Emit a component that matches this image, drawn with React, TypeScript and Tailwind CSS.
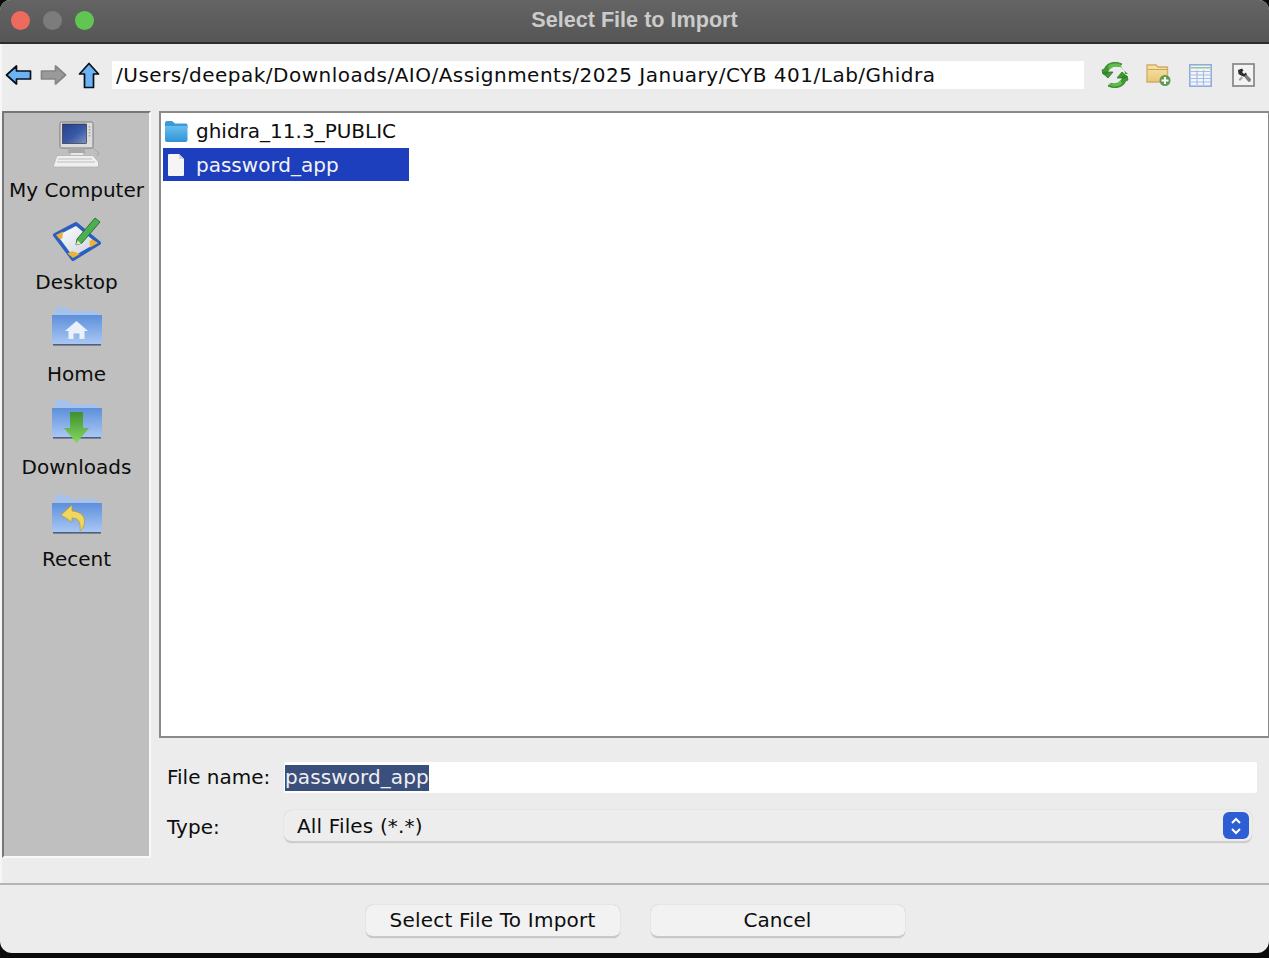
const font = "font-['DejaVu_Sans',sans-serif]";

function BackArrow({ flip = false, gray = false }: { flip?: boolean; gray?: boolean }) {
  return (
    <svg width="27" height="22" viewBox="0 0 27 22" className={flip ? "-scale-x-100" : ""}>
      <path
        d="M1.5 11 L11.5 2 V7 H25.5 V15 H11.5 V20 Z"
        fill={gray ? "#9a9a9a" : "#6db2f2"}
        stroke={gray ? "#858585" : "#07101c"}
        strokeWidth="1.7"
        strokeLinejoin="round"
      />
    </svg>
  );
}

function UpArrow() {
  return (
    <svg width="22" height="27" viewBox="0 0 22 27">
      <path
        d="M11 1.5 L20.5 12 H15.5 V25.5 H6.5 V12 H1.5 Z"
        fill="#6db2f2"
        stroke="#07101c"
        strokeWidth="1.7"
        strokeLinejoin="round"
      />
    </svg>
  );
}

function RefreshIcon() {
  return (
    <svg width="28" height="28" viewBox="0 0 28 28">
      <path
        d="M2 13 L6 13 C7 7 12 4 18 5.5 L21 3 C14 -0.5 5 2 3.5 8 L1 9 Z M6 11 L1.5 12 L7 17 L12 11 Z"
        fill="#3f9a32"
        stroke="#2b7a24"
        strokeWidth="0.8"
      />
      <path d="M7 5 C11 2 16 2 20 4 L21 7 C17 4.5 11 5 8.5 9 Z" fill="#5ec04a" />
      <path d="M21 7 C23 9 24 10.5 24 13 L27 13 L21.5 8 Z" fill="#3f9a32" />
      <path
        d="M26 15 L22 15 C21 21 16 24 10 22.5 L7 25 C14 28.5 23 26 24.5 20 L27 19 Z M22 17 L26.5 16 L21 11 L16 17 Z"
        fill="#3f9a32"
        stroke="#2b7a24"
        strokeWidth="0.8"
      />
      <path d="M21 23 C17 26 12 26 8 24 L7.5 22.5 C12 24 17 23 19.5 19 Z" fill="#5ec04a" />
    </svg>
  );
}

function NewFolderIcon() {
  return (
    <svg width="26" height="24" viewBox="0 0 26 24">
      <defs>
        <linearGradient id="nf" x1="0" y1="0" x2="0" y2="1">
          <stop offset="0" stopColor="#f6e5a8" />
          <stop offset="1" stopColor="#e9c877" />
        </linearGradient>
      </defs>
      <path d="M1 2 H10 L12 4 H21.5 V19 H1 Z" fill="url(#nf)" stroke="#d2aa6a" strokeWidth="1.3" />
      <path d="M1.5 7 H21 V6 H1.5 Z" fill="#c9a565" />
      <circle cx="19" cy="17.5" r="5.5" fill="#5f9a52" />
      <path d="M19 14 V21 M15.5 17.5 H22.5" stroke="#fff" strokeWidth="2" />
    </svg>
  );
}

function TableIcon() {
  return (
    <svg width="23" height="23" viewBox="0 0 23 23">
      <rect x="0.8" y="0.8" width="21.4" height="21.4" fill="#f2f5fb" stroke="#8eaedb" strokeWidth="1.6" />
      <rect x="2" y="3" width="19" height="1.5" fill="#9cc48c" />
      <path
        d="M2 7.5 H21 M2 11 H21 M2 14.5 H21 M2 18 H21 M8 6 V21 M14.5 6 V21"
        stroke="#a7bce2"
        strokeWidth="1.2"
      />
    </svg>
  );
}

function ToolsIcon() {
  return (
    <svg width="23" height="24" viewBox="0 0 23 24">
      <rect x="1" y="1" width="21" height="22" fill="#f3f3f3" stroke="#8c8c8c" strokeWidth="1.8" />
      <path d="M6 7 L10 5.5 L11.5 7.5 L10 9 L12 11 L14 9.5 L15 12 L13 14 L10 13 L6.5 11 Z" fill="#2b2b2b" />
      <path d="M12 13.5 L14.5 11.5 L19 16 L18.5 18.5 L16.5 19 Z" fill="#7d7d7d" />
      <path d="M6.5 16.5 L9.5 13.5 L11 15 L8 18 Z" fill="#a3a3a3" />
    </svg>
  );
}

function ComputerIcon() {
  return (
    <svg width="50" height="48" viewBox="0 0 50 48">
      <defs>
        <linearGradient id="scr" x1="0" y1="0" x2="1" y2="1">
          <stop offset="0" stopColor="#26408c" />
          <stop offset="0.55" stopColor="#3a5aa6" />
          <stop offset="1" stopColor="#8093c4" />
        </linearGradient>
      </defs>
      <rect x="8" y="2" width="33" height="26" rx="1.5" fill="#dcdcdc" stroke="#7a7a7a" />
      <rect x="10.5" y="4" width="24" height="19.5" fill="url(#scr)" stroke="#222" strokeWidth="0.6" />
      <path d="M37.5 6 V18" stroke="#a5a5a5" strokeWidth="1.6" strokeDasharray="1.5 1.5" />
      <path d="M17 28 H32 L33.5 33 H15.5 Z" fill="#a8a8a8" />
      <path d="M19 33 H31 V35 H19 Z" fill="#e8e8e8" />
      <path d="M1.5 45.5 L5 35.5 H41 L46.5 42 V47 H1.5 Z" fill="#efefef" stroke="#b0b0b0" strokeWidth="0.8" />
      <path d="M6 39 H40 M5 42 H43" stroke="#bdbdbd" strokeWidth="1" />
      <path d="M41 28 L47 33 L45 36" fill="none" stroke="#a0a0a0" strokeWidth="0.8" />
    </svg>
  );
}

function DesktopIcon() {
  return (
    <svg width="50" height="47" viewBox="0 0 50 47">
      <defs>
        <linearGradient id="pad" x1="0" y1="0" x2="1" y2="1">
          <stop offset="0" stopColor="#ffffff" />
          <stop offset="1" stopColor="#c9d0dd" />
        </linearGradient>
      </defs>
      <path d="M3 20 L24 9 L47 28 L21 44 Z" fill="#3a74d6" stroke="#2a5fc0" strokeWidth="4" strokeLinejoin="round" />
      <path d="M5.5 20.5 L24 11 L44.5 28 L21 41.5 Z" fill="url(#pad)" />
      <path d="M4 20 L11 16.5 L10.5 23 L8 24.5 Z M46 28 L38 32.5 L37.5 26 L40.5 24.5 Z M21 43 L28 39 L20 36 L15.5 38.5 Z" fill="#eab23a" />
      <path d="M25 24 L43 3 L48 7 L30 28 L24 30 Z" fill="#4caf50" stroke="#1e6a2a" strokeWidth="0.9" strokeLinejoin="round" />
      <path d="M25.5 25.5 L24 30 L29 28.5 Z" fill="#f3e3c0" />
    </svg>
  );
}

function BlueFolder({ id, children }: { id: string; children?: React.ReactNode }) {
  return (
    <svg width="52" height="42" viewBox="0 0 52 42" className="overflow-visible">
      <defs>
        <linearGradient id={id} x1="0" y1="0" x2="0" y2="1">
          <stop offset="0" stopColor="#5d8fdb" />
          <stop offset="1" stopColor="#a9c7f4" />
        </linearGradient>
      </defs>
      <path d="M4 8 V2 Q4 0 6 0 H16 L20 4 H46 V10 H4 Z" fill="#a7c2ea" />
      <path d="M1 8 H51 V37 H1 Z" fill={`url(#${id})`} />
      <rect x="2" y="37" width="48" height="1.6" fill="#4d6075" />
      {children}
    </svg>
  );
}

function SideItem({ label, iconClass, children }: { label: string; iconClass: string; children: React.ReactNode }) {
  return (
    <div className="flex h-[92.2px] flex-col items-center">
      <div className={`flex h-[64px] w-full items-end justify-center ${iconClass}`}>{children}</div>
      <span className="text-[20px] leading-[26px] whitespace-nowrap text-[#0d0d0d]">{label}</span>
    </div>
  );
}

function FileRowIcon() {
  return (
    <svg width="18" height="24" viewBox="0 0 18 24">
      <path d="M1 2 Q1 1 2 1 H12 L17 6 V22 Q17 23 16 23 H2 Q1 23 1 22 Z" fill="#f5f5f5" />
      <path d="M12 1 V6 H17 Z" fill="#d4d4d4" />
    </svg>
  );
}

function FolderRowIcon() {
  return (
    <svg width="24" height="23" viewBox="0 0 24 23">
      <defs>
        <linearGradient id="ff" x1="0" y1="0" x2="0" y2="1">
          <stop offset="0" stopColor="#68bdee" />
          <stop offset="1" stopColor="#2f93d7" />
        </linearGradient>
      </defs>
      <path d="M1 3 Q1 1 3 1 H8 L11 3.5 H22 Q23.5 3.5 23.5 5 V8 H1 Z" fill="#3b9ad9" />
      <path d="M1 6 H23.5 V20 Q23.5 22 21.5 22 H3 Q1 22 1 20 Z" fill="url(#ff)" />
    </svg>
  );
}

export default function App() {
  return (
    <div className={`h-[958px] w-full overflow-hidden bg-[#0a0a0a] ${font}`}>
      <div className="flex h-[953px] flex-col overflow-hidden rounded-t-[10px] rounded-b-[12px] bg-[#ececec]">
        {/* Title bar */}
        <div className="relative flex h-[44px] shrink-0 items-center justify-center border-b-2 border-[#2c2c2c] bg-gradient-to-b from-[#646464] to-[#565656] pb-[1px]">
          <div className="absolute left-[11px] top-[11px] flex gap-[13px]">
            <span className="h-[19px] w-[19px] rounded-full bg-[#ec6a5e]" />
            <span className="h-[19px] w-[19px] rounded-full bg-[#7c7c7c]" />
            <span className="h-[19px] w-[19px] rounded-full bg-[#61c554]" />
          </div>
          <span className="font-['Liberation_Sans',sans-serif] text-[21.6px] font-bold text-[#cbcbcb]">
            Select File to Import
          </span>
        </div>

        {/* Toolbar */}
        <div className="flex h-[67px] shrink-0 items-center border-l-2 border-[#f6f6f6] pb-[5px] pl-[3px]">
          <BackArrow />
          <div className="ml-[8px]">
            <BackArrow flip gray />
          </div>
          <div className="ml-[11px]">
            <UpArrow />
          </div>
          <div className="ml-[12px] flex h-[28px] w-[972px] items-center bg-white pl-[4px] text-[20px] tracking-[0.5px] whitespace-nowrap text-[#0d0d0d]">
            /Users/deepak/Downloads/AIO/Assignments/2025 January/CYB 401/Lab/Ghidra
          </div>
          <div className="ml-[17px] flex items-center">
            <RefreshIcon />
            <div className="ml-[17px]">
              <NewFolderIcon />
            </div>
            <div className="ml-[17px]">
              <TableIcon />
            </div>
            <div className="ml-[20px]">
              <ToolsIcon />
            </div>
          </div>
        </div>

        {/* Sidebar and file list */}
        <div className="flex min-h-0 flex-1 items-start border-l-2 border-[#f6f6f6]">
          <div className="h-[747px] w-[149px] shrink-0 border-2 border-t-[#777] border-r-[#f8f8f8] border-b-[#f8f8f8] border-l-[#777] bg-[#bfbfbf]">
            <SideItem label="My Computer" iconClass="pb-[9px]">
              <ComputerIcon />
            </SideItem>
            <SideItem label="Desktop" iconClass="pb-[7px]">
              <DesktopIcon />
            </SideItem>
            <SideItem label="Home" iconClass="pb-[12px]">
              <BlueFolder id="fh">
                <path d="M25.5 14 L37 24 H33.5 V32 H28.5 V26.5 H22.5 V32 H17.5 V24 H14 Z" fill="#eaf1fb" />
              </BlueFolder>
            </SideItem>
            <SideItem label="Downloads" iconClass="pb-[12px]">
              <BlueFolder id="fd">
                <defs>
                  <linearGradient id="dl" x1="0" y1="0" x2="0" y2="1">
                    <stop offset="0" stopColor="#3f8f2e" />
                    <stop offset="1" stopColor="#86d860" />
                  </linearGradient>
                </defs>
                <path d="M19 12 H32 V28 H38 L25.5 43 L13 28 H19 Z" fill="url(#dl)" />
              </BlueFolder>
            </SideItem>
            <SideItem label="Recent" iconClass="pb-[9px]">
              <BlueFolder id="fr">
                <path
                  d="M21 10 L10 20 L21 27 V23 C27 23 30 26 29 36 C36 30 36 17 21 16 Z"
                  fill="#f0d860"
                  stroke="#b99b30"
                  strokeWidth="0.8"
                />
              </BlueFolder>
            </SideItem>
          </div>

          <div className="ml-[8px] flex min-w-0 flex-1 flex-col">
            <div className="h-[627px] border-2 border-r border-[#8a8a8a] bg-white pt-[2px] pl-[2px] text-[20px]">
              <div className="flex h-[33px] items-center pb-[1px] text-[#0d0d0d]">
                <div className="ml-[1px] flex w-[32px] items-center">
                  <FolderRowIcon />
                </div>
                ghidra_11.3_PUBLIC
              </div>
              <div className="flex h-[33px] w-[246px] items-center bg-[#1d3ebd] text-[#f3f3f3]">
                <div className="ml-[4px] flex w-[29px] items-center">
                  <FileRowIcon />
                </div>
                password_app
              </div>
            </div>

            <div className="mt-[24px] flex h-[31px] items-center pr-[12px] pl-[8px] text-[20px] text-[#0d0d0d]">
              <span className="w-[117px] shrink-0 pb-[2px]">File name:</span>
              <div className="flex h-full flex-1 items-center rounded-[2px] bg-white pl-[1px]">
                <span className="h-[26px] bg-[#3b4f7d] leading-[24px] tracking-[0.1px] text-[#f0f0f0]">password_app</span>
              </div>
            </div>

            <div className="mt-[17px] flex h-[33px] items-center pr-[17px] pl-[8px] text-[20px] text-[#0d0d0d]">
              <span className="w-[117px] shrink-0 pt-[1px]">Type:</span>
              <div className="flex h-full flex-1 items-center justify-between rounded-[8px] border-b-2 border-[#cdcdcd] bg-[#ededed] pr-[3px] pl-[13px] shadow-[0_0_1px_#bbb]">
                <span className="pt-[1px] tracking-[0.15px]">All Files (*.*)</span>
                <div className="flex h-[27px] w-[26px] items-center justify-center rounded-[6px] bg-[#2d5ed3]">
                  <svg width="14" height="20" viewBox="0 0 14 20" fill="none" stroke="#fff" strokeWidth="2">
                    <path d="M3 7 L7 3 L11 7 M3 13 L7 17 L11 13" />
                  </svg>
                </div>
              </div>
            </div>
          </div>
        </div>

        {/* Button bar */}
        <div className="flex h-[70px] shrink-0 items-start justify-center gap-[31px] border-t-2 border-[#b4b4b4] pt-[20px] pl-[1px] text-[20px] text-[#0d0d0d]">
          <button className="h-[33px] w-[254px] rounded-[7px] border-b-2 border-[#c9c9c9] bg-[#f2f2f2] pb-[1px] tracking-[0.2px] shadow-[0_0_1px_#aaa]">
            Select File To Import
          </button>
          <button className="h-[33px] w-[254px] rounded-[7px] border-b-2 border-[#c9c9c9] bg-[#f2f2f2] pb-[1px] shadow-[0_0_1px_#aaa]">
            Cancel
          </button>
        </div>
      </div>
    </div>
  );
}
